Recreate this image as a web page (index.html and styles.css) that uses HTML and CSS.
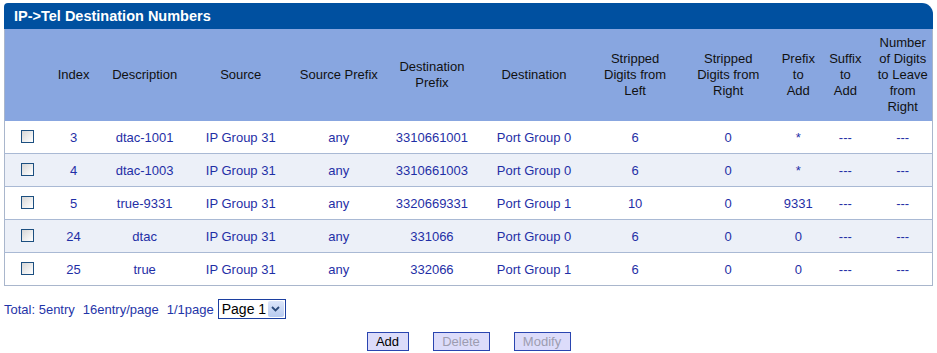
FILE: index.html
```html
<!DOCTYPE html>
<html>
<head>
<meta charset="utf-8">
<link rel="stylesheet" href="styles.css">
</head>
<body>
<div class="panel">
  <div class="title">IP-&gt;Tel Destination Numbers</div>
  <table class="grid">
    <colgroup>
      <col class="c-chk"><col class="c-idx"><col class="c-desc"><col class="c-src"><col class="c-sp">
      <col class="c-dp"><col class="c-dst"><col class="c-sl"><col class="c-sr"><col class="c-pa">
      <col class="c-sa"><col class="c-nd">
    </colgroup>
    <thead>
      <tr>
        <th></th>
        <th>Index</th>
        <th>Description</th>
        <th>Source</th>
        <th>Source Prefix</th>
        <th>Destination<br>Prefix</th>
        <th>Destination</th>
        <th>Stripped<br>Digits from<br>Left</th>
        <th>Stripped<br>Digits from<br>Right</th>
        <th>Prefix<br>to<br>Add</th>
        <th>Suffix<br>to<br>Add</th>
        <th>Number<br>of Digits<br>to Leave<br>from<br>Right</th>
      </tr>
    </thead>
    <tbody>
      <tr>
        <td><span class="chk"></span></td><td>3</td><td>dtac-1001</td><td>IP Group 31</td><td>any</td>
        <td>3310661001</td><td>Port Group 0</td><td>6</td><td>0</td><td>*</td><td>---</td><td>---</td>
      </tr>
      <tr class="alt">
        <td><span class="chk"></span></td><td>4</td><td>dtac-1003</td><td>IP Group 31</td><td>any</td>
        <td>3310661003</td><td>Port Group 0</td><td>6</td><td>0</td><td>*</td><td>---</td><td>---</td>
      </tr>
      <tr>
        <td><span class="chk"></span></td><td>5</td><td>true-9331</td><td>IP Group 31</td><td>any</td>
        <td>3320669331</td><td>Port Group 1</td><td>10</td><td>0</td><td>9331</td><td>---</td><td>---</td>
      </tr>
      <tr class="alt">
        <td><span class="chk"></span></td><td>24</td><td>dtac</td><td>IP Group 31</td><td>any</td>
        <td>331066</td><td>Port Group 0</td><td>6</td><td>0</td><td>0</td><td>---</td><td>---</td>
      </tr>
      <tr>
        <td><span class="chk"></span></td><td>25</td><td>true</td><td>IP Group 31</td><td>any</td>
        <td>332066</td><td>Port Group 1</td><td>6</td><td>0</td><td>0</td><td>---</td><td>---</td>
      </tr>
    </tbody>
  </table>
</div>
<div class="pager">
  <span>Total: 5entry</span><span>16entry/page</span><span>1/1page</span>
  <span class="select">Page 1<span class="arrow"><svg width="9" height="6" viewBox="0 0 9 6"><path d="M1 1 L4.5 4.5 L8 1" fill="none" stroke="#2b4a7a" stroke-width="1.8"/></svg></span></span>
</div>
<div class="actions">
  <span class="btn b-add">Add</span>
  <span class="btn disabled b-wide">Delete</span>
  <span class="btn disabled b-wide">Modify</span>
</div>
</body>
</html>
```

FILE: styles.css
```css
html, body {
  margin: 0;
  padding: 0;
  background: #ffffff;
}
body {
  padding: 3px 4px 0 4px;
  font-family: "Liberation Sans", Arial, sans-serif;
  font-size: 13px;
}
.panel {
  width: 929px;
}
.title {
  height: 26px;
  line-height: 26px;
  background: #0050a0;
  color: #ffffff;
  font-weight: bold;
  font-size: 14.5px;
  padding-left: 10px;
  border-radius: 4px 11px 0 0;
}
.grid {
  width: 929px;
  border-collapse: collapse;
  table-layout: fixed;
  border: 1px solid #a9b6cc;
  border-top: none;
}
.c-chk { width: 46px; }
.c-idx { width: 46px; }
.c-desc { width: 96px; }
.c-src { width: 96px; }
.c-sp { width: 100px; }
.c-dp { width: 86px; }
.c-dst { width: 118px; }
.c-sl { width: 84px; }
.c-sr { width: 102px; }
.c-pa { width: 38px; }
.c-sa { width: 56px; }
.c-nd { width: 59px; }
.grid thead tr {
  background: #88a6e0;
}
.grid th {
  height: 92px;
  padding: 0;
  font-weight: normal;
  color: #111111;
  line-height: 16px;
  text-align: center;
  vertical-align: middle;
}
.grid td {
  height: 32px;
  padding: 0;
  text-align: center;
  vertical-align: middle;
  color: #1f2fa6;
  border-top: 1px solid #a9b9d4;
}
.grid tbody tr:first-child td {
  border-top: none;
}
.grid tr.alt {
  background: #ecf0f8;
}
.chk {
  display: inline-block;
  width: 11px;
  height: 11px;
  border: 1px solid #1c4f80;
  background: linear-gradient(135deg, #d6d6d6 0%, #f4f4f4 70%, #ffffff 100%);
  vertical-align: middle;
  margin-top: -3px;
}
.pager {
  margin-top: 13px;
  display: flex;
  align-items: center;
  gap: 8px;
  color: #1f35a8;
  height: 20px;
}
.select {
  display: inline-flex;
  align-items: center;
  justify-content: space-between;
  box-sizing: border-box;
  width: 68px;
  height: 20px;
  border: 1px solid #1c3fa0;
  color: #000000;
  font-size: 14px;
  padding: 0 1px 0 3px;
  margin-left: -4px;
}
.arrow {
  display: inline-flex;
  align-items: center;
  justify-content: center;
  width: 16px;
  height: 16px;
  background: linear-gradient(#dce6fa, #b8cbf0);
  border-radius: 2px;
}
.actions {
  display: flex;
  justify-content: center;
  gap: 24px;
  margin-top: 13px;
}
.btn {
  box-sizing: border-box;
  height: 19px;
  line-height: 17px;
  border: 1px solid #2a45b0;
  background: #dcdcfa;
  color: #000000;
  font-size: 13px;
  text-align: center;
}
.b-add { width: 42px; }
.b-wide { width: 57px; }
.btn.disabled {
  color: #9c9cb0;
}
```
